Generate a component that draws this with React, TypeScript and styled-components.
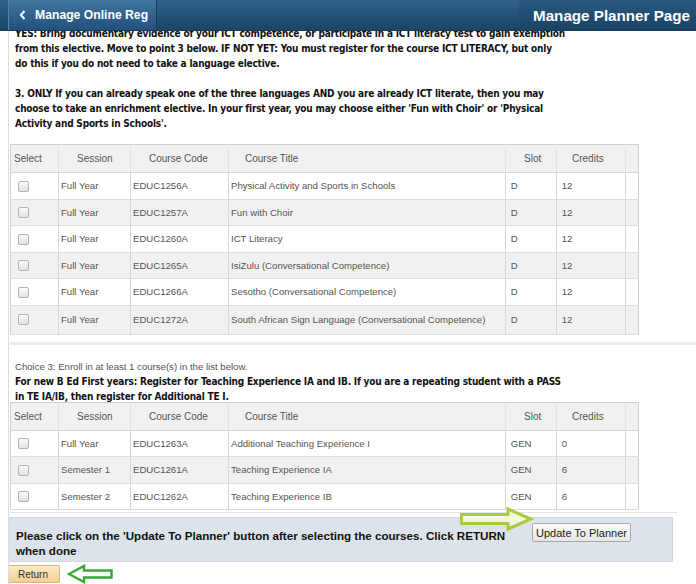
import React from 'react';
import styled, { createGlobalStyle } from 'styled-components';

const Global = createGlobalStyle`
  html, body { margin: 0; padding: 0; background: #fff; }
  body {
    width: 696px; height: 584px; overflow: hidden;
    font-family: "Liberation Sans", Arial, sans-serif;
  }
`;

const Page = styled.div`
  width: 696px;
  height: 584px;
  display: flex;
  flex-direction: column;
  overflow: hidden;
`;

const Header = styled.header`
  height: 30px;
  flex: none;
  display: flex;
  align-items: stretch;
  justify-content: space-between;
  background: linear-gradient(#30618a, #1c4466);
  border-bottom: 1px solid #163a58;
  position: relative;
  z-index: 2;
`;

const BackButton = styled.div`
  margin-left: 8px;
  width: 137px;
  display: flex;
  align-items: center;
  gap: 9px;
  padding-left: 10px;
  background: linear-gradient(#4275a0, #23507a);
  border-left: 1px solid #5283ad;
  border-right: 1px solid #163d5c;
  color: #fff;
  font-weight: bold;
  font-size: 12.2px;
`;

const Title = styled.div`
  padding: 0 6px 0 14px;
  display: flex;
  align-items: center;
  color: #fff;
  font-weight: bold;
  font-size: 15.2px;
  background: linear-gradient(#2a5880, #1b4365);
`;

const Content = styled.div`
  flex: 1;
  margin-left: 8px;
  border-left: 1px solid #dcdcdc;
  display: flex;
  flex-direction: column;
  overflow: hidden;
`;

const Instructions = styled.div<{ $top?: number }>`
  margin-top: ${(p) => p.$top ?? 0}px;
  padding-left: 6px;
  font-family: "DejaVu Sans Condensed", "DejaVu Sans", Verdana, sans-serif;
  font-weight: bold;
  font-size: 10px;
  letter-spacing: -0.2px;
  line-height: 15px;
  color: #111;
  p { margin: 0; }
`;

const Gap = styled.div<{ $h: number }>`
  height: ${(p) => p.$h}px;
  flex: none;
`;

const Table = styled.table<{ $mt?: number }>`
  margin: ${(p) => p.$mt ?? 0}px 0 0 1px;
  width: 628px;
  border-collapse: collapse;
  table-layout: fixed;
  border: 1px solid #cfcfcf;
  font-size: 9.6px;
  color: #555;
`;

const Th = styled.th<{ $pl?: number }>`
  height: 27px;
  padding: 0 0 0 ${(p) => p.$pl ?? 18}px;
  text-align: left;
  font-weight: normal;
  font-size: 10px;
  color: #555;
  background: #f1f1f1;
  border-left: 1px solid #e3e3e3;
  border-bottom: 1px solid #d6d6d6;
  &:first-child { border-left: none; }
`;

const Tr = styled.tr<{ $alt: boolean; $h?: number }>`
  height: ${(p) => p.$h ?? 26.5}px;
  background: ${(p) => (p.$alt ? '#f1f1f1' : '#fff')};
  border-bottom: 1px solid #dedede;
`;

const Td = styled.td`
  padding: 0 0 0 2px;
  border-left: 1px solid #d8d8d8;
  white-space: nowrap;
  overflow: hidden;
  &:first-child { border-left: none; padding-left: 7px; }
`;

const Check = styled.span`
  display: inline-block;
  width: 9px;
  height: 9px;
  border: 1px solid #b3b3b3;
  border-radius: 2px;
  background: linear-gradient(#fafafa, #e2e2e2);
  vertical-align: middle;
`;

const Separator = styled.div`
  margin-left: 1px;
  height: 3px;
  background: #ececec;
  flex: none;
`;

const ChoiceNote = styled.div`
  padding-left: 6px;
  font-size: 9.6px;
  line-height: 14px;
  color: #555;
`;

const ThinLine = styled.div`
  margin-left: 1px;
  width: 667px;
  height: 1px;
  background: #e4e4e4;
  flex: none;
`;

const ActionBar = styled.div`
  position: relative;
  margin-left: -1px;
  margin-top: 4px;
  width: 665px;
  height: 45px;
  flex: none;
  background: #dde3ea;
  border: 1px solid #d2d8de;
  box-sizing: border-box;
  display: flex;
  align-items: flex-start;
  justify-content: space-between;
  padding: 10px 41px 0 7px;
`;

const ActionText = styled.div`
  font-weight: bold;
  font-size: 11.6px;
  line-height: 15px;
  color: #111;
`;

const UpdateButton = styled.button`
  margin-top: -5px;
  flex: none;
  width: 99px;
  height: 19px;
  padding: 0;
  font-family: "Liberation Sans", Arial, sans-serif;
  font-size: 11px;
  color: #222;
  background: linear-gradient(#fbfbfb, #e6e6e6);
  border: 1px solid #a8a8a8;
  border-radius: 2px;
`;

const ArrowOverlay = styled.svg`
  position: absolute;
  left: 443px;
  top: -11px;
`;

const ReturnRow = styled.div`
  display: flex;
  align-items: center;
  gap: 7px;
  margin-left: -3px;
  margin-top: 2px;
`;

const ReturnButton = styled.button`
  width: 54px;
  height: 18px;
  padding: 0;
  font-family: "Liberation Sans", Arial, sans-serif;
  font-size: 10px;
  color: #333;
  background: linear-gradient(#fcebc9, #f3cf92);
  border: 1px solid #d8b47a;
  border-radius: 1px;
`;

type Row = { session: string; code: string; title: string; slot: string; credits: string };

const table1: Row[] = [
  { session: 'Full Year', code: 'EDUC1256A', title: 'Physical Activity and Sports in Schools', slot: 'D', credits: '12' },
  { session: 'Full Year', code: 'EDUC1257A', title: 'Fun with Choir', slot: 'D', credits: '12' },
  { session: 'Full Year', code: 'EDUC1260A', title: 'ICT Literacy', slot: 'D', credits: '12' },
  { session: 'Full Year', code: 'EDUC1265A', title: 'IsiZulu (Conversational Competence)', slot: 'D', credits: '12' },
  { session: 'Full Year', code: 'EDUC1266A', title: 'Sesotho (Conversational Competence)', slot: 'D', credits: '12' },
  { session: 'Full Year', code: 'EDUC1272A', title: 'South African Sign Language (Conversational Competence)', slot: 'D', credits: '12' },
];

const table2: Row[] = [
  { session: 'Full Year', code: 'EDUC1263A', title: 'Additional Teaching Experience I', slot: 'GEN', credits: '0' },
  { session: 'Semester 1', code: 'EDUC1261A', title: 'Teaching Experience IA', slot: 'GEN', credits: '6' },
  { session: 'Semester 2', code: 'EDUC1262A', title: 'Teaching Experience IB', slot: 'GEN', credits: '6' },
];

function CourseTable({ rows, lastH, mt }: { rows: Row[]; lastH?: number; mt?: number }) {
  return (
    <Table $mt={mt}>
      <colgroup>
        <col style={{ width: 48 }} />
        <col style={{ width: 72 }} />
        <col style={{ width: 98 }} />
        <col style={{ width: 277 }} />
        <col style={{ width: 51 }} />
        <col style={{ width: 69 }} />
        <col style={{ width: 13 }} />
      </colgroup>
      <thead>
        <tr>
          <Th $pl={3}>Select</Th>
          <Th>Session</Th>
          <Th>Course Code</Th>
          <Th $pl={16}>Course Title</Th>
          <Th>Slot</Th>
          <Th $pl={15}>Credits</Th>
          <Th $pl={0}></Th>
        </tr>
      </thead>
      <tbody>
        {rows.map((r, i) => (
          <Tr key={r.code} $alt={i % 2 === 1} $h={i === rows.length - 1 ? lastH : undefined}>
            <Td><Check /></Td>
            <Td>{r.session}</Td>
            <Td>{r.code}</Td>
            <Td>{r.title}</Td>
            <Td>&nbsp;{r.slot}</Td>
            <Td>&nbsp;{r.credits}</Td>
            <Td></Td>
          </Tr>
        ))}
      </tbody>
    </Table>
  );
}

export default function App() {
  return (
    <>
      <Global />
      <Page>
        <Header>
          <BackButton>
            <svg width="7" height="10" viewBox="0 0 7 10">
              <path d="M5.5 1 L1.8 5 L5.5 9" stroke="#fff" strokeWidth="2" fill="none" />
            </svg>
            Manage Online Reg
          </BackButton>
          <Title>Manage Planner Page</Title>
        </Header>
        <Content>
          <Instructions $top={-5}>
            <p>YES: Bring documentary evidence of your ICT competence, or participate in a ICT literacy test to gain exemption</p>
            <p>from this elective. Move to point 3 below. IF NOT YET: You must register for the course ICT LITERACY, but only</p>
            <p>do this if you do not need to take a language elective.</p>
            <p>&nbsp;</p>
            <p>3. ONLY If you can already speak one of the three languages AND you are already ICT literate, then you may</p>
            <p>choose to take an enrichment elective. In your first year, you may choose either 'Fun with Choir' or 'Physical</p>
            <p>Activity and Sports in Schools'.</p>
          </Instructions>
          <Gap $h={13} />
          <CourseTable rows={table1} lastH={29} />
          <Gap $h={7} />
          <Separator />
          <Gap $h={15} />
          <ChoiceNote>Choice 3: Enroll in at least 1 course(s) in the list below.</ChoiceNote>
          <Instructions>
            <p>For new B Ed First years: Register for Teaching Experience IA and IB. If you are a repeating student with a PASS</p>
            <p>in TE IA/IB, then register for Additional TE I.</p>
          </Instructions>
          <CourseTable rows={table2} mt={-2} />
          <Gap $h={2} />
          <ThinLine />
          <ActionBar>
            <ActionText>
              Please click on the 'Update To Planner' button after selecting the courses. Click RETURN
              <br />
              when done
            </ActionText>
            <UpdateButton>Update To Planner</UpdateButton>
            <ArrowOverlay width="82" height="24" viewBox="0 0 82 24">
              <path
                d="M9.5 7.5 H56 V2 L79 12 L56 22 V16.5 H9.5 Z"
                fill="#f3f8dc"
                stroke="#a9cc3a"
                strokeWidth="3"
                strokeLinejoin="miter"
              />
            </ArrowOverlay>
          </ActionBar>
          <ReturnRow>
            <ReturnButton>Return</ReturnButton>
            <svg width="47" height="20" viewBox="0 0 47 20">
              <path
                d="M2 10 L17 2 V6.5 H44.5 V13.5 H17 V18 Z"
                fill="#fff"
                stroke="#39a83c"
                strokeWidth="2.5"
                strokeLinejoin="miter"
              />
            </svg>
          </ReturnRow>
        </Content>
      </Page>
    </>
  );
}
